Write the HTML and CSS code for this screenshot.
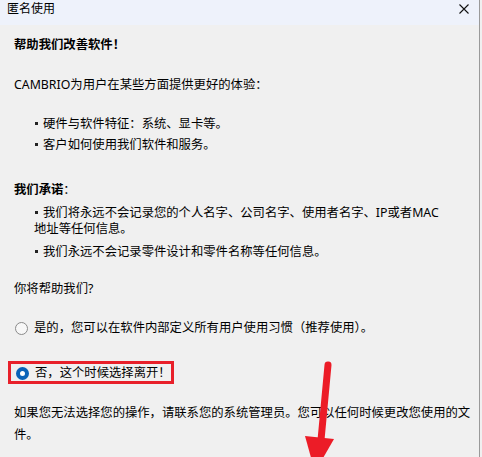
FILE: index.html
```html
<!DOCTYPE html>
<html lang="zh-CN">
<head>
<meta charset="UTF-8">
<link rel="stylesheet" href="styles.css">
</head>
<body>
  <div class="window">
    <div class="title_bar">
      <span class="title">匿名使用</span>
      <svg class="close" width="10" height="10" viewBox="0 0 10 10">
        <path d="M0.5 0.5 L9.5 9.5 M9.5 0.5 L0.5 9.5" stroke="#111" stroke-width="1.1" fill="none"/>
      </svg>
    </div>

    <div class="content">
      <div class="heading">帮助我们改善软件！</div>
      <div class="line intro">CAMBRIO为用户在某些方面提供更好的体验：</div>

      <div class="item first"><span class="dot"></span>硬件与软件特征：系统、显卡等。</div>
      <div class="item"><span class="dot"></span>客户如何使用我们软件和服务。</div>

      <div class="heading promise">我们承诺<span class="normal">：</span></div>
      <div class="item wrap"><span class="dot"></span>我们将永远不会记录您的个人名字、公司名字、使用者名字、IP或者MAC地址等任何信息。</div>
      <div class="item wrap"><span class="dot"></span>我们永远不会记录零件设计和零件名称等任何信息。</div>

      <div class="line question">你将帮助我们?</div>

      <div class="option yes"><span class="radio"></span>是的，您可以在软件内部定义所有用户使用习惯（推荐使用）。</div>
      <div class="option no marked"><span class="radio checked"></span>否，这个时候选择离开！</div>

      <div class="note">如果您无法选择您的操作，请联系您的系统管理员。您可以任何时候更改您使用的文件。</div>
    </div>

    <!-- the red pointer drawn over the dialog -->
    <svg class="pointer" width="482" height="457" viewBox="0 0 482 457">
      <line x1="328" y1="365" x2="321" y2="440" stroke="#ec1c27" stroke-width="7" stroke-linecap="round"/>
      <polygon points="305,436 334,439 315,472" fill="#ec1c27"/>
    </svg>
  </div>
</body>
</html>
```

FILE: styles.css
```css
body {
  margin: 0;
  background: #f0f0f0;
  font-family: "Noto Sans", "Noto Sans CJK SC", sans-serif;
  font-size: 12.33px;
  color: #000;
}

.window {
  width: 479px;
  height: 457px;
  border-right: 1px solid #9a9a9a;
  background: #f0f0f0;
  overflow: hidden;
}

.title_bar {
  height: 25px;
  background: #eef2fb;
  display: flex;
  justify-content: space-between;
  padding: 0 10px 0 7px;
}

.title {
  line-height: 18px;
  font-size: 12px;
}

.close {
  margin-top: 4px;
}

.content {
  padding-left: 14px;
  width: 460px;
}

.line, .heading, .item, .option {
  line-height: 16px;
}

.heading {
  font-weight: bold;
  margin-top: 12px;
}

.normal {
  font-weight: normal;
}

.intro {
  margin-top: 24px;
}

.item {
  padding-left: 20px;
  margin-top: 5px;
  width: 411px;
}

.item.first {
  margin-top: 23px;
}

.dot {
  display: inline-block;
  width: 3px;
  height: 3px;
  background: #222;
  vertical-align: middle;
  margin: 0 5px 2px 1px;
}

.wrap {
  margin-top: 7px;
}

.promise {
  margin-top: 29px;
}

.question {
  margin-top: 21px;
}

.option {
  display: flex;
  align-items: center;
}

.yes {
  margin-top: 23px;
}

.no {
  margin-top: 25px;
}

.marked {
  width: fit-content;
  margin-left: -6px;
  border: 3px solid #e8202a;
  padding: 1px 0 0 4px;
}

.radio {
  width: 11px;
  height: 11px;
  border: 1px solid #8a8a8a;
  border-radius: 50%;
  background: #f7f7f7;
  margin: 0 6px 0 1px;
  flex: none;
}

.radio.checked {
  width: 5px;
  height: 5px;
  border: 4px solid #0a63b8;
  background: #fff;
}

.note {
  margin-top: 18px;
  line-height: 22px;
}

.pointer {
  position: absolute;
  left: 0;
  top: 0;
}
```
